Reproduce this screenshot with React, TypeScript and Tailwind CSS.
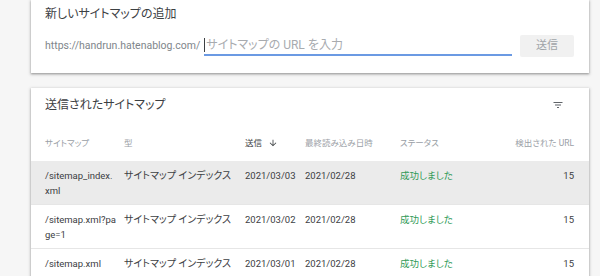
import React from 'react';

const jp = "font-['Roboto','Noto_Sans_CJK_JP',sans-serif] [font-feature-settings:'palt']";

const rows = [
  { path: ['/sitemap_index.', 'xml'], sent: '2021/03/03', read: '2021/02/28', hover: true },
  { path: ['/sitemap.xml?pa', 'ge=1'], sent: '2021/03/02', read: '2021/02/28', hover: false },
  { path: ['/sitemap.xml'], sent: '2021/03/01', read: '2021/02/28', hover: false },
];

const FilterIcon = () => (
  <svg width="12" height="12" viewBox="0 0 24 24" fill="#5f6368">
    <path d="M10 18h4v-2h-4v2zM3 6v2h18V6H3zm3 7h12v-2H6v2z" />
  </svg>
);

const ArrowDown = () => (
  <svg width="10" height="10" viewBox="0 0 24 24" fill="#3c4043">
    <path d="M20 12l-1.41-1.41L13 16.17V4h-2v12.17l-5.58-5.59L4 12l8 8 8-8z" />
  </svg>
);

export default function App() {
  return (
    <div className={`h-[276px] overflow-hidden bg-[#f6f6f6] pl-[31px] ${jp}`}>
      {/* add sitemap */}
      <div className="w-[558px] bg-white pt-[5px] pb-[16px] pl-[14px] pr-[15px] shadow-[0_1px_2px_rgba(0,0,0,0.3),0_1px_3px_1px_rgba(0,0,0,0.12)]">
        <h2 className="text-[12px] leading-[18px] text-[#3c4043]">新しいサイトマップの追加</h2>
        <div className="mt-[12px] flex h-[22px] items-start">
          <span className="flex h-[22px] items-center text-[10.5px] text-[#80868b]">https://handrun.hatenablog.com/</span>
          <div className="ml-[4px] flex h-[21px] w-[308px] items-center border-b-2 border-[#6b9ae3]">
            <span className="h-[14px] w-px bg-[#3c4043]" />
            <span className="ml-[1px] text-[12px] text-[#a8abaf]">サイトマップの URL を入力</span>
          </div>
          <button className="ml-auto flex h-[22px] w-[54px] items-center justify-center rounded-[2px] bg-[#f1f1f1] text-[11px] text-[#a0a4a8]">
            送信
          </button>
        </div>
      </div>

      {/* submitted sitemaps */}
      <div className="mt-[15px] w-[558px] bg-white pt-[8px] shadow-[0_1px_2px_rgba(0,0,0,0.3),0_1px_3px_1px_rgba(0,0,0,0.12)]">
        <div className="flex items-center justify-between pl-[14px] pr-[25px]">
          <h2 className="text-[12px] leading-[18px] text-[#3c4043]">送信されたサイトマップ</h2>
          <FilterIcon />
        </div>
        <div className="grid h-[47px] grid-cols-[79px_121px_60px_95px_1fr_auto] items-end pb-[12px] pl-[14px] pr-[15px] text-[8.5px] leading-[12px] text-[#9aa0a6]">
          <span>サイトマップ</span>
          <span>型</span>
          <span className="flex items-center gap-[6px] text-[#3c4043]">
            送信
            <ArrowDown />
          </span>
          <span>最終読み込み日時</span>
          <span>ステータス</span>
          <span className="text-right">検出された URL</span>
        </div>
        {rows.map((r, i) => (
          <div
            key={i}
            className={`grid h-[44px] grid-cols-[79px_121px_60px_95px_1fr_auto] items-start border-b border-[#e6e6e6] pl-[14px] pr-[15px] pt-[7px] text-[9.5px] leading-[15px] text-[#3c4043] ${
              r.hover ? 'bg-[#ebebeb]' : 'bg-white'
            }`}
          >
            <span className="flex flex-col">
              {r.path.map((p) => (
                <span key={p} className="whitespace-nowrap">{p}</span>
              ))}
            </span>
            <span className="text-[10px]">サイトマップ インデックス</span>
            <span>{r.sent}</span>
            <span>{r.read}</span>
            <span className="text-[9.5px] text-[#2f9a57]">成功しました</span>
            <span className="text-right">15</span>
          </div>
        ))}
      </div>
    </div>
  );
}
